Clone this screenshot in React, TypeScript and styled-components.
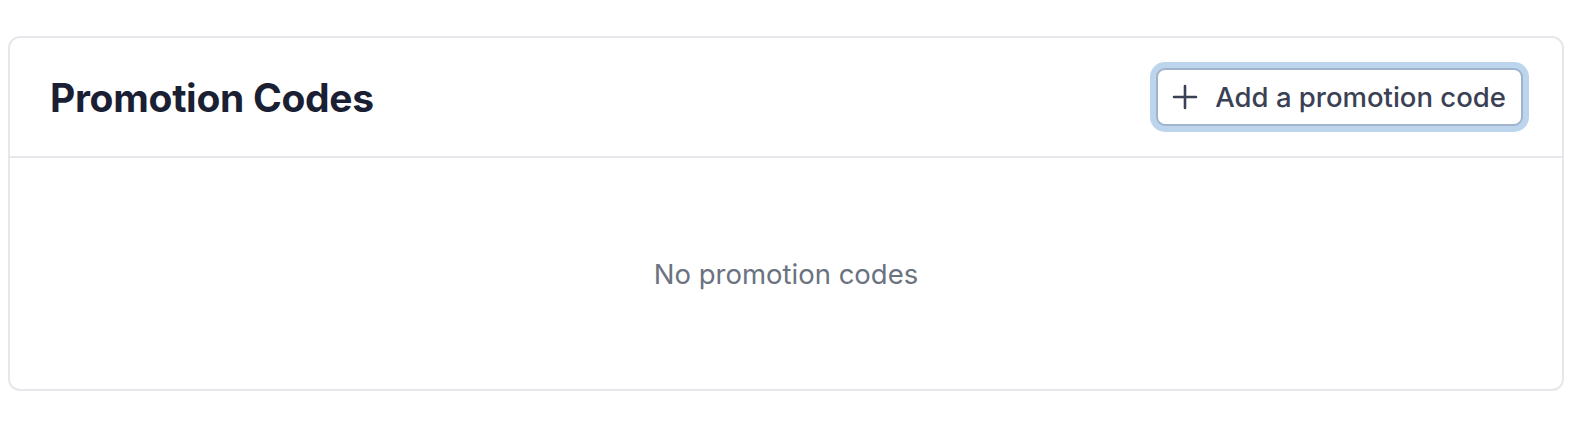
import styled, { createGlobalStyle } from "styled-components";

const GlobalStyle = createGlobalStyle`
  body {
    margin: 8px;
    background: #ffffff;
    font-family: Inter, "Noto Sans", "Liberation Sans", sans-serif;
  }
`;

const StPage = styled.main`
  padding: 28px 4px 0 0;
`;

const StCard = styled.section`
  display: flex;
  flex-direction: column;

  border: 2px solid #e5e7eb;
  border-radius: 12px;
  background: #ffffff;
`;

const StHeader = styled.header`
  display: flex;
  justify-content: space-between;
  align-items: center;

  height: 118px;
  padding: 0 39px 0 40px;

  border-bottom: 2px solid #e5e7eb;
`;

const StTitle = styled.h2`
  margin: 0;

  font-size: 39px;
  font-weight: 700;
  letter-spacing: -0.3px;
  color: #1a1f33;
`;

const StAddButton = styled.button`
  display: flex;
  align-items: center;
  gap: 17px;

  height: 58px;
  padding: 0 15px 0 14px;

  border: 2px solid #9fb4cc;
  border-radius: 9px;
  background: #ffffff;
  box-shadow: 0 0 0 6px #bcd5ec;

  font-family: inherit;
  font-size: 27.5px;
  font-weight: 500;
  color: #3a4154;
  cursor: pointer;
`;

const StEmpty = styled.div`
  display: flex;
  justify-content: center;
  align-items: center;

  height: 231px;

  font-size: 27.5px;
  color: #6b7280;
`;

function PlusIcon() {
  return (
    <svg width="26" height="26" viewBox="0 0 26 26" fill="none" stroke="#3a4154" strokeWidth="2.6" strokeLinecap="round">
      <path d="M13 2v22M2 13h22" />
    </svg>
  );
}

export default function App() {
  return (
    <StPage>
      <GlobalStyle />
      <StCard>
        <StHeader>
          <StTitle>Promotion Codes</StTitle>
          <StAddButton type="button">
            <PlusIcon />
            Add a promotion code
          </StAddButton>
        </StHeader>
        <StEmpty>No promotion codes</StEmpty>
      </StCard>
    </StPage>
  );
}
